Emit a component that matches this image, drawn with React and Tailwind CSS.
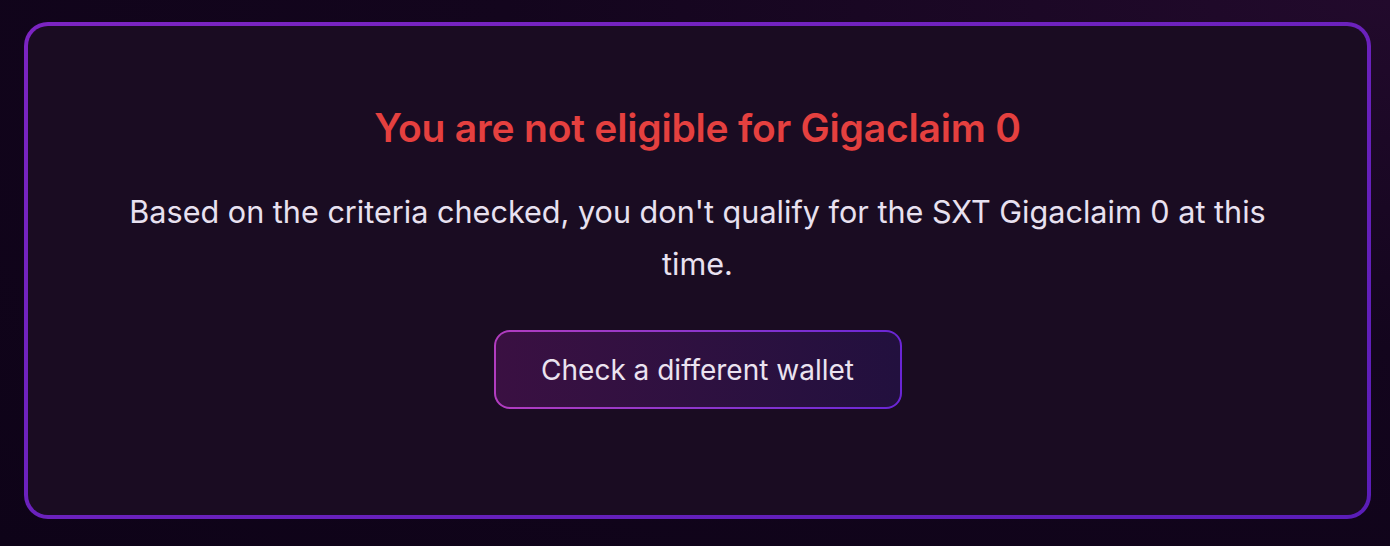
export default function App() {
  return (
    <div className="w-[1390px] h-[546px] bg-[#10041a] bg-[radial-gradient(ellipse_at_top_right,#220a2c_0%,#13051d_45%,#0e0318_100%)] pl-6 pr-[19px] pt-[22px] pb-[27px] font-['Inter',sans-serif]">
      <div className="h-full rounded-[24px] p-[4px] bg-gradient-to-br from-[#7c24c2] to-[#5a1db8]">
        <div className="h-full rounded-[20px] bg-[#1a0c22] flex flex-col items-center pt-[81px] px-[90px]">
          <h1 className="text-[39px] leading-[42px] font-semibold text-[#e5403f] tracking-[-0.2px]">
            You are not eligible for Gigaclaim 0
          </h1>
          <p className="mt-[37px] max-w-[1180px] text-center text-[30.6px] leading-[52px] text-[#e8e1f0]">
            Based on the criteria checked, you don't qualify for the SXT Gigaclaim 0 at this time.
          </p>
          <button className="mt-[40px] rounded-[16px] p-[2px] bg-gradient-to-r from-[#b23cc0] to-[#6a25d6]">
            <div className="w-[404px] h-[75px] rounded-[14px] bg-gradient-to-r from-[#3a1042] to-[#22103e] flex items-center justify-center text-[28px] text-[#ebe3f0]">
              Check a different wallet
            </div>
          </button>
        </div>
      </div>
    </div>
  );
}
